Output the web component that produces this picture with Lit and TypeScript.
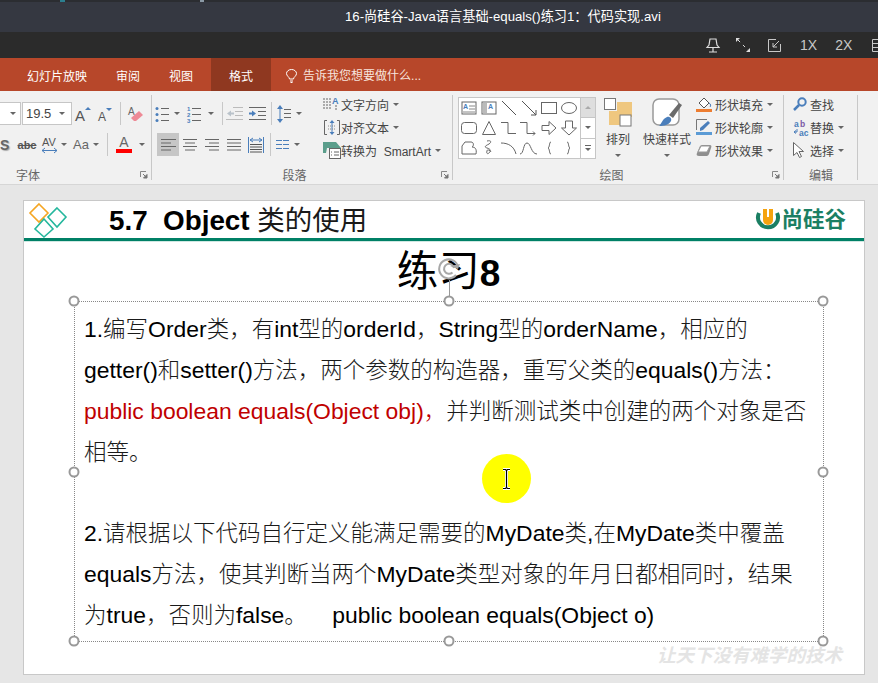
import { LitElement, html, css, svg } from 'lit';
import { customElement } from 'lit/decorators.js';

const BLUE = '#4a7ebb';
const GR = '#666';

// ribbon icons, all drawn on their own small grid
const icons: Record<string, [number, number, any]> = {
  fontUp: [16, 16, svg`<text x="0" y="15" font-family="Liberation Sans" font-size="15" fill="#555">A</text><path d="M10 4l3-3 3 3z" fill="${BLUE}"/>`],
  fontDown: [14, 16, svg`<text x="0" y="15" font-family="Liberation Sans" font-size="12" fill="#555">A</text><path d="M8 2h6l-3 3z" fill="${BLUE}"/>`],
  eraser: [16, 16, svg`<text x="0" y="9" font-family="Liberation Sans" font-size="10" fill="#666">A</text><path d="M3 12l8-7 4 4-7 6H6z" fill="#ee8a96"/>`],
  av: [17, 16, svg`<text x="1" y="9" font-family="Liberation Sans" font-size="11" fill="#555">AV</text><path d="M1 13.500h15M1 13.500l3-2.500M1 13.500l3 2.500M16 13.500l-3-2.500M16 13.500l-3 2.500" stroke="${BLUE}" fill="none"/>`],
  bullets: [15, 16, svg`<g fill="${BLUE}"><circle cx="2" cy="2.500" r="1.500"/><circle cx="2" cy="8.500" r="1.500"/><circle cx="2" cy="14.500" r="1.500"/></g><path d="M6 2.500h8M6 8.500h8M6 14.500h8" stroke="${GR}"/>`],
  numbers: [15, 16, svg`<g font-family="Liberation Sans" font-size="6" font-weight="700" fill="${BLUE}"><text x="0" y="5">1</text><text x="0" y="11">2</text><text x="0" y="17">3</text></g><path d="M5 2.500h9M5 8.500h9M5 14.500h9" stroke="${GR}"/>`],
  outdent: [17, 14, svg`<path d="M7 .5h10M9 4.500h8M9 8.500h8M0 12.500h17" stroke="#bbb"/><path d="M1 6.500l4-3v2h3v2H5v2z" fill="#b9c2ca"/>`],
  indent: [17, 14, svg`<path d="M0 .5h17M9 4.500h8M9 8.500h8M0 12.500h17" stroke="${GR}"/><path d="M7 6.500l-4-3v2H0v2h3v2z" fill="${BLUE}"/>`],
  spacing: [14, 18, svg`<path d="M3 2v14" stroke="${BLUE}"/><path d="M3 0l3 4H0zM3 18l3-4H0z" fill="${BLUE}"/><path d="M7 4.500h7M7 8.500h7M7 12.500h7" stroke="${GR}"/>`],
  alignL: [15, 12, svg`<path d="M0 .5h15M0 4h10M0 7.500h15M0 11h10" stroke="${GR}"/>`],
  alignC: [14, 12, svg`<path d="M0 .5h14M2 4h10M0 7.500h14M2 11h10" stroke="${GR}"/>`],
  alignR: [14, 12, svg`<path d="M0 .5h14M4 4h10M0 7.500h14M4 11h10" stroke="${GR}"/>`],
  justify: [14, 12, svg`<path d="M0 .5h14M0 4h14M0 7.500h14M0 11h14" stroke="${GR}"/>`],
  distribute: [16, 16, svg`<path d="M.5 0v16M15.500 0v16" stroke="${BLUE}"/><path d="M2 3h12M2 3l3-2M2 3l3 2M14 3l-3-2M14 3l-3 2" stroke="${BLUE}" fill="none"/><path d="M2 7.500h12M2 10h12M2 12.500h12M2 15h12" stroke="#555"/>`],
  columns: [13, 10, svg`<path d="M0 .5h6M7 .5h6M0 4.500h6M7 4.500h6M0 8.500h6M7 8.500h6" stroke="${BLUE}"/>`],
  textDir: [17, 16, svg`<path d="M1 2v12M4 2v12M7 2v12" stroke="${GR}" stroke-dasharray="2 1"/><text x="9" y="8" font-family="Liberation Sans" font-weight="700" font-size="9" fill="${BLUE}">A</text><path d="M13 9v6" stroke="#666" stroke-dasharray="2 1"/>`],
  textAlign: [16, 15, svg`<path d="M3 .5H.5v14H3M13 .5h2.500v14H13" stroke="${GR}" fill="none"/><path d="M8 0l2.500 3h-5zM8 15l2.500-3h-5z" fill="${BLUE}"/><path d="M8 3v9" stroke="${BLUE}"/><path d="M4 6h8M4 9h8" stroke="#888" stroke-dasharray="1 1"/>`],
  smartArt: [18, 17, svg`<path d="M0 0h13l5 6H4l-1 5H0z" fill="#5b9e8c"/><rect x="6.500" y="6.500" width="11" height="10" fill="#fff" stroke="#666"/><path d="M8 10h1M11 10h5M8 13h1M11 13h5" stroke="#666"/>`],
  arrange: [28, 30, svg`<rect x="13" y="4" width="15" height="15" fill="#efc77f"/><rect x="5" y="13" width="15" height="14" fill="#efc77f"/><rect x=".5" y=".5" width="11" height="11" fill="#fff" stroke="#777"/><rect x="16" y="17" width="11" height="11" fill="#fff" stroke="#777"/>`],
  quick: [30, 30, svg`<rect x="1" y="1" width="26" height="26" rx="6" fill="#fff" stroke="#999" stroke-width="1.500"/><path d="M17 17l10-12 3 2-9 13z" fill="#6b6b6b"/><path d="M7 28c2-1 3-7 8-9 3-1 5 2 4 4-2 4-7 5-12 5z" fill="${BLUE}"/>`],
  fill: [16, 15, svg`<path d="M3 6l5-5 5 5-5 5z" fill="#fff" stroke="#555"/><path d="M13 6c2 1 2 3 1 4" stroke="${BLUE}" fill="none"/><rect y="12" width="16" height="3" fill="#ed7d31"/>`],
  outline: [16, 16, svg`<path d="M.5 11V.5H11" stroke="#777" fill="none"/><path d="M4 9l8-7 2 2-7 7-3 1z" fill="${BLUE}"/><rect y="13" width="16" height="3" fill="#5b9bd5"/>`],
  effect: [16, 13, svg`<path d="M1 9l3-7c1-1 2-1 3-1h7c1 0 2 1 1 3l-2 6c-1 2-2 2-3 2H3C1 12 0 11 1 9z" fill="#8f8f8f"/><path d="M2 8l3-6h9l-3 6z" fill="#fff" stroke="#999"/>`],
  find: [14, 14, svg`<circle cx="9" cy="5" r="3.700" fill="none" stroke="${BLUE}" stroke-width="2"/><path d="M6 8l-5 5" stroke="${BLUE}" stroke-width="2.500"/>`],
  replace: [16, 15, svg`<g font-family="Liberation Sans" font-size="8.500" font-weight="700"><text x="1" y="6.500" fill="${BLUE}">a</text><text x="7" y="6.500" fill="#7b5aa6">b</text><text x="6" y="15.500" fill="${BLUE}">ac</text></g><path d="M4 9v3H1M1 12l2-1.500M1 12l2 1.500" stroke="${BLUE}" fill="none"/>`],
  select: [11, 16, svg`<path d="M.5.5v13l3.500-3 2.500 5 2-1-2.500-5h4.500z" fill="#fff" stroke="#666"/>`],
};

const shapes = [
  svg`<rect x="3" y="4" width="14" height="12" fill="#fff" stroke="#666"/><text x="4" y="11" font-size="7" font-family="Liberation Sans" font-weight="700" fill="${BLUE}">A</text><path d="M10 8h6M10 11h6M4 14h12" stroke="#888"/>`,
  svg`<rect x="3" y="4" width="14" height="12" fill="#fff" stroke="#666"/><path d="M5 5v10M7 5v10" stroke="#777"/><text x="9" y="11" font-size="7" font-family="Liberation Sans" font-weight="700" fill="${BLUE}">A</text>`,
  svg`<path d="M3 3l14 14" stroke="#555"/>`,
  svg`<path d="M3 3l14 14M17 17v-5M17 17h-5" stroke="#555" fill="none"/>`,
  svg`<rect x="2.500" y="4.500" width="15" height="11" fill="#fff" stroke="#666"/>`,
  svg`<ellipse cx="10" cy="10" rx="7.500" ry="5.500" fill="#fff" stroke="#666"/>`,
  svg`<rect x="2.500" y="4.500" width="15" height="11" rx="3" fill="#fff" stroke="#666"/>`,
  svg`<path d="M10 3.500l6.500 13h-13z" fill="#fff" stroke="#666"/>`,
  svg`<path d="M2 4.500h7v11h8" fill="none" stroke="#666"/>`,
  svg`<path d="M1 4.500h7v11h8M16 15.500l-2-2M16 15.500l-2 2" fill="none" stroke="#666"/>`,
  svg`<path d="M3 7.500h7v-4l7 6.500-7 6.500v-4H3z" fill="#fff" stroke="#666"/>`,
  svg`<path d="M6.500 3h7v7h4L10 17 2.500 10h4z" fill="#fff" stroke="#666"/>`,
  svg`<path d="M3 16V8l3-4h6c3 0 3 4 1 5 3 0 5 2 4 7z" fill="#fff" stroke="#666"/>`,
  svg`<path d="M8 3c4-1 5 1 2 3-4 2-5 3-2 4 4 1 4 3 2 5-1 1-3 1-2-2 0-2 3-1 4 1" fill="none" stroke="#666"/>`,
  svg`<path d="M2 5c7 0 13 3 15 11" fill="none" stroke="#666"/>`,
  svg`<path d="M1 16c4 0 3-11 7-11s4 11 10 11" fill="none" stroke="#666"/>`,
  svg`<path d="M12 4c-2 0-1 5-3 6 2 1 1 6 3 6" fill="none" stroke="#555"/>`,
  svg`<path d="M8 4c2 0 1 5 3 6-2 1-1 6-3 6" fill="none" stroke="#555"/>`,
];

const launcher = svg`<path d="M.5 6V.5H6" stroke="#888" fill="none"/><path d="M3 3l4 4M7 3.500V7H3.500z" stroke="#777" fill="#777"/>`;

// Latin and Chinese runs have different sizes on the slide
const runs = (text: string) =>
  text.split(/([\u3000-\u9fff\uff00-\uffef]+)/).map((part, i) =>
    i % 2 ? html`<span class="zh">${part}</span>` : part);

@customElement('app-root')
export class AppRoot extends LitElement {
  static styles = css`
    :host {
      display: block;
      position: relative;
      width: 878px;
      height: 683px;
      overflow: hidden;
      background: #e6e6e6;
      font-family: 'Liberation Sans', 'Noto Sans CJK SC', sans-serif;
    }
    svg { display: block; flex: none; overflow: visible; }

    .titlebar {
      height: 32px;
      box-sizing: border-box;
      padding-top: 2px;
      background:
        linear-gradient(90deg, transparent 60px, #2c7f8f 60px, #2c7f8f 65px, transparent 65px) 0 0 / 878px 2px no-repeat,
        linear-gradient(90deg, transparent 200px, #8a99a5 200px, #8a99a5 204px, transparent 204px) 0 0 / 878px 2px no-repeat,
        linear-gradient(#2b2d31, #2b2d31) 0 0 / 100% 2px no-repeat,
        #353841;
      color: #fff;
      font-size: 13.200px;
      line-height: 30px;
      display: flex;
    }
    .titlebar span { margin-left: 345px; white-space: nowrap; }

    .player {
      height: 26px;
      background: #2b2b2b;
      display: flex;
      align-items: center;
      padding-left: 706px;
      color: #c8c8c8;
      font-size: 14px;
    }
    .player .p1 { margin-left: 16px; }
    .player .p2 { margin-left: 18px; }
    .player .p3 { margin-left: 19px; }
    .player .p4 { margin-left: 18px; }
    .player .p5 { margin-left: 20px; }

    .tabs {
      height: 33px;
      background: #b7472a;
      display: flex;
      align-items: stretch;
      color: #fff;
      font-size: 12px;
      line-height: 34px;
      padding-left: 27px;
      box-sizing: border-box;
    }
    .tabs .t { margin-right: 29px; white-space: nowrap; padding-top: 2px; }
    .tabs .active {
      background: #8f3820;
      width: 60px;
      margin: 0 15px 0 -11px;
      text-align: center;
      padding-top: 2px;
    }
    .tabs .tell { display: flex; align-items: center; gap: 6px; padding-top: 3px; color: #f7e4de; font-size: 12px; }

    .ribbon {
      height: 94px;
      box-sizing: border-box;
      background: #f1f1f1;
      border-bottom: 1px solid #d6d6d6;
      display: flex;
      color: #444;
      font-size: 12px;
      overflow: hidden;
    }
    .group {
      position: relative;
      flex: none;
      box-sizing: border-box;
      height: 93px;
    }
    .group::after {
      content: '';
      position: absolute;
      right: 0;
      top: 4px;
      bottom: 4px;
      width: 1px;
      background: #c8c8c8;
    }
    .label {
      position: absolute;
      bottom: -1px;
      height: 18px;
      line-height: 18px;
      left: 0;
      right: 0;
      text-align: center;
      color: #666;
      font-size: 12px;
    }
    .label.lf { right: 96px; }
    .label.lp { right: 16px; }
    .label.ld { right: 14px; }
    .launch { position: absolute; right: 4px; bottom: 5px; }

    .g-font { width: 152px; }
    .g-para { width: 301px; display: flex; }
    .g-draw { width: 331px; display: flex; }
    .g-edit { width: 74px; padding: 3px 0 0 9px; }

    .rows { display: flex; flex-direction: column; gap: 8px; padding-top: 11px; }
    .row { display: flex; align-items: center; height: 23px; }
    .slot { display: flex; align-items: center; justify-content: center; height: 23px; flex: none; }
    .w8 { width: 8px; } .w10 { width: 10px; } .w11 { width: 11px; } .w12 { width: 12px; }
    .w16 { width: 16px; } .w18 { width: 18px; } .w22 { width: 22px; } .w23 { width: 23px; }
    .w24 { width: 24px; } .w30 { width: 30px; }
    .sep { width: 1px; height: 23px; background: #c8c8c8; flex: none; }
    .m4 { margin-left: 4px; } .m5 { margin-left: 5px; } .m7 { margin-left: 7px; } .m8 { margin-left: 8px; } .m2 { margin-left: 2px; }
    .m3 { margin-left: 3px; }
    .caret {
      display: block;
      width: 0;
      height: 0;
      border: 3px solid transparent;
      border-top: 3px solid #666;
      border-bottom: 0;
      flex: none;
    }
    .combo {
      height: 23px;
      box-sizing: border-box;
      background: #fff;
      border: 1px solid #c6c6c6;
      display: flex;
      align-items: center;
      justify-content: space-between;
      padding: 0 6px 0 3px;
      font-size: 13px;
      color: #444;
      flex: none;
    }
    .combo.c1 { width: 21px; border-left: 0; margin-right: 1px; justify-content: flex-end; padding-right: 4px; }
    .combo.c2 { width: 50px; }
    .s { font-weight: 700; font-size: 14px; color: #666; text-shadow: 1px 1px 1px #aaa; justify-content: flex-start; }
    .abc { font-size: 11px; color: #555; text-decoration: line-through; font-weight: 700; }
    .aa { font-size: 13px; color: #666; }
    .color { display: flex; flex-direction: column; align-items: center; font-size: 14px; line-height: 13px; color: #666; }
    .color i { display: block; width: 16px; height: 4px; background: #f00; margin-top: 0; }
    .selected { background: #c6c6c6; width: 22px; }

    .stack { display: flex; flex-direction: column; gap: 3px; }
    .stack .line { display: flex; align-items: center; height: 20px; white-space: nowrap; }
    .stack .caret { margin-left: 4px; }
    .ls { display: flex; justify-content: center; flex: none; }
    .para-right .ls { width: 19px; }
    .shape-col .ls { width: 19px; justify-content: flex-start; }
    .g-edit .ls { width: 17px; justify-content: flex-start; }
    .para-left { width: 170px; padding-left: 1px; box-sizing: border-box; }
    .para-right { padding-top: 3px; }

    .gallery {
      margin: 6px 0 0 5px;
      width: 138px;
      height: 62px;
      box-sizing: border-box;
      display: flex;
      border: 1px solid #c6c6c6;
      background: #fff;
      flex: none;
    }
    .cells { width: 122px; display: grid; grid-template-columns: repeat(6, 20px); grid-auto-rows: 20px; }
    .scroll { width: 14px; border-left: 1px solid #c6c6c6; display: flex; flex-direction: column; }
    .scroll div { flex: 1; display: flex; flex-direction: column; align-items: center; justify-content: center; border-bottom: 1px solid #c6c6c6; gap: 2px; }
    .scroll div:first-child { background: #dedede; }
    .scroll div:last-child { border-bottom: 0; }
    .up { border-top: 0; border-bottom: 3px solid #aaa; }
    .bar { display: block; width: 6px; height: 1px; background: #666; }

    .big { display: flex; flex-direction: column; align-items: center; padding-top: 7px; flex: none; }
    .big .ic { height: 30px; }
    .big .txt { margin-top: 3px; line-height: 18px; white-space: nowrap; }
    .big .caret { margin-top: 5px; }
    .b1 { width: 44px; }
    .b2 { width: 52px; margin-left: 1px; }
    .shape-col { margin-left: 3px; padding-top: 3px; }

    .slide {
      position: absolute;
      left: 23px;
      top: 200px;
      width: 842px;
      height: 475px;
      box-sizing: border-box;
      background: #fff;
      border: 1px solid #c8c8c8;
    }
    .head {
      height: 37px;
      display: flex;
      align-items: center;
      padding: 0 18px 0 4px;
      border-bottom: 3px solid #008066;
      box-shadow: 0 1px 0 #cfe8e2;
    }
    .head h1 {
      margin: 0 0 3px 41px;
      flex: 1;
      font-size: 27.800px;
      font-weight: 700;
      white-space: pre;
      color: #000;
    }
    .head h1 span { font-weight: 400; font-size: 27.500px; color: #1a1a1a; }
    .logo { display: flex; align-items: center; gap: 1px; color: #1b7f63; font-size: 21.500px; font-weight: 700; line-height: 24px; }
    .exercise {
      margin: 1px 0 0;
      height: 59px;
      line-height: 59px;
      padding-left: 9px;
      text-align: center;
      font-size: 41.500px;
      font-weight: 400;
      color: #000;
    }
    .exercise b { font-weight: 700; font-size: 37px; }
    .box {
      position: relative;
      margin-left: 50px;
      width: 750px;
      height: 341px;
      box-sizing: border-box;
      border: 1px dotted #888;
      padding: 7px 0 0 9px;
      font-size: 22.900px;
      line-height: 41px;
      color: #000;
      white-space: nowrap;
    }
    .box div { height: 41px; white-space: pre; }
    .box .gap-line { height: 40px; }
    .zh { font-size: 22.500px; font-weight: 300; color: #1a1a1a; }
    .red, .red .zh { color: #c00000; }
    .h {
      position: absolute;
      width: 11px;
      height: 11px;
      box-sizing: border-box;
      border: 2px solid #999;
      border-radius: 50%;
      background: #fff;
      transform: translate(-50%, -50%);
    }
    .hl { left: -1px; } .hc { left: 50%; } .hr { left: 100%; }
    .ht { top: -1px; } .hm { top: 50%; } .hb { top: 100%; }
    .stem { position: absolute; left: 50%; top: -22px; width: 1px; height: 22px; background: #999; }
    .rotate { position: absolute; left: calc(50% - 13px); top: -46px; }
    .watermark {
      position: absolute;
      left: 633px;
      top: 440px;
      font-size: 18.500px;
      font-weight: 700;
      font-style: italic;
      color: #e4e4e4;
      white-space: nowrap;
    }
    .pointer {
      position: absolute;
      left: 482px;
      top: 454px;
      width: 49px;
      height: 49px;
      border-radius: 50%;
      background: #ff0;
      display: flex;
      align-items: center;
      justify-content: center;
    }
  `;

  private icon(name: string) {
    const [w, h, body] = icons[name];
    return html`<svg width=${w} height=${h} viewBox="0 0 ${w} ${h}">${body}</svg>`;
  }

  private slot(name: string, cls = 'w22') {
    return html`<span class="slot ${cls}">${this.icon(name)}</span>`;
  }

  private caret(cls = 'w8') {
    return html`<span class="slot ${cls}"><i class="caret"></i></span>`;
  }

  private launchIcon() {
    return html`<svg class="launch" width="8" height="8" viewBox="0 0 8 8">${launcher}</svg>`;
  }

  private line(name: string, text: string, arrow = true) {
    return html`<div class="line"><span class="ls">${this.icon(name)}</span><span>${text}</span>${arrow ? html`<i class="caret"></i>` : ''}</div>`;
  }

  render() {
    return html`
      <div class="titlebar"><span>16-尚硅谷-Java语言基础-equals()练习1：代码实现.avi</span></div>

      <div class="player">
        <svg width="14" height="16" viewBox="0 0 14 16" fill="none" stroke="#ddd" stroke-width="1.200">
          <path d="M4 2h6l1 6 2 2.500H1L3 8zM7 10.500V15M3 15h8"/>
        </svg>
        <svg class="p1" width="14" height="14" viewBox="0 0 14 14" fill="#ddd" stroke="#ddd">
          <path d="M2 2l10 10" stroke-dasharray="3 4"/><path d="M0 0h4L0 4zM14 14h-4l4-4z" stroke="none"/>
        </svg>
        <svg class="p2" width="13" height="13" viewBox="0 0 13 13" fill="none" stroke="#c8c8c8">
          <path d="M12.500 5v7.500H.5V.5H8M11 2L5 8M5 4v4h4"/>
        </svg>
        <span class="p3">1X</span>
        <span class="p4">2X</span>
        <svg class="p5" width="10" height="13" viewBox="0 0 10 13" fill="none" stroke="#c8c8c8">
          <path d="M.5.5h12v12H.5zM.5 4.500h12M.5 8.500h12"/>
        </svg>
      </div>

      <div class="tabs">
        <span class="t">幻灯片放映</span>
        <span class="t">审阅</span>
        <span class="t">视图</span>
        <span class="active">格式</span>
        <span class="tell">
          <svg width="11" height="14" viewBox="0 0 11 14" fill="none" stroke="#fff">
            <path d="M3.500 10c0-2-3-3-3-5.500a5 4 0 0 1 10 0C10.500 7 7.500 8 7.500 10zM4 12h3M4.500 13.500h2"/>
          </svg>
          告诉我您想要做什么...
        </span>
      </div>

      <div class="ribbon">
        <div class="group g-font">
          <div class="rows">
            <div class="row">
              <span class="combo c1"><i class="caret"></i></span>
              <span class="combo c2">19.5<i class="caret"></i></span>
              ${this.slot('fontUp')}${this.slot('fontDown')}
              <span class="sep m4"></span>
              ${this.slot('eraser', 'w30')}
            </div>
            <div class="row">
              <span class="slot w12 s">S</span>
              <span class="slot w22 m4 abc">abc</span>
              ${this.slot('av', 'w22')}${this.caret()}
              <span class="slot w22 m2 aa">Aa</span>${this.caret()}
              <span class="sep m7"></span>
              <span class="slot w24 m4"><span class="color">A<i></i></span></span>
              ${this.caret('w12')}
            </div>
          </div>
          <div class="label lf">字体</div>
          ${this.launchIcon()}
        </div>

        <div class="group g-para">
          <div class="para-left">
            <div class="rows">
              <div class="row">
                ${this.slot('bullets', 'w18')}${this.caret('w12')}
                ${this.slot('numbers', 'w22')}${this.caret('w12')}
                <span class="sep m5"></span>
                ${this.slot('outdent', 'w23')}${this.slot('indent', 'w22')}
                <span class="sep m3"></span>
                ${this.slot('spacing', 'w23')}${this.caret('w8')}
              </div>
              <div class="row">
                <span class="slot m4 selected">${this.icon('alignL')}</span>
                ${this.slot('alignC')}${this.slot('alignR')}${this.slot('justify')}${this.slot('distribute')}
                <span class="sep m3"></span>
                ${this.slot('columns', 'w22')}${this.caret('w8')}
              </div>
            </div>
          </div>
          <div class="stack para-right">
            ${this.line('textDir', '文字方向')}
            ${this.line('textAlign', '对齐文本')}
            ${this.line('smartArt', '转换为\u00a0 SmartArt')}
          </div>
          <div class="label lp">段落</div>
          ${this.launchIcon()}
        </div>

        <div class="group g-draw">
          <div class="gallery">
            <div class="cells">
              ${shapes.map((s) => html`<svg width="20" height="20" viewBox="0 0 20 20">${s}</svg>`)}
            </div>
            <div class="scroll">
              <div><i class="caret up"></i></div>
              <div><i class="caret"></i></div>
              <div><i class="bar"></i><i class="caret"></i></div>
            </div>
          </div>
          <div class="big b1">
            <span class="ic">${this.icon('arrange')}</span>
            <span class="txt">排列</span>
            <i class="caret"></i>
          </div>
          <div class="big b2">
            <span class="ic">${this.icon('quick')}</span>
            <span class="txt">快速样式</span>
            <i class="caret"></i>
          </div>
          <div class="stack shape-col">
            ${this.line('fill', '形状填充')}
            ${this.line('outline', '形状轮廓')}
            ${this.line('effect', '形状效果')}
          </div>
          <div class="label ld">绘图</div>
          ${this.launchIcon()}
        </div>

        <div class="group g-edit">
          <div class="stack">
            ${this.line('find', '查找', false)}
            ${this.line('replace', '替换')}
            ${this.line('select', '选择')}
          </div>
          <div class="label">编辑</div>
        </div>
      </div>

      <div class="slide">
        <div class="head">
          <svg width="40" height="36" viewBox="0 0 40 36" fill="none" stroke-width="1.600">
            <path d="M11 2l9 9-9 9-9-9z" stroke="#f5a623"/>
            <path d="M29 6l9 9-9 10-9-10z" stroke="#25b79d"/>
            <path d="M16 17l9 10-9 8-9-8z" stroke="#25b79d"/>
          </svg>
          <h1>5.7  Object <span>类的使用</span></h1>
          <div class="logo">
            <svg width="24" height="24" viewBox="0 0 24 24">
              <path d="M3 5A10 10 0 1 0 21 5" fill="none" stroke="#1b7f63" stroke-width="4"/>
              <path d="M7 1h10v11a5 5 0 0 1-10 0z" fill="#f5a30f"/>
              <path d="M11 0h2v9h-2z" fill="#fff"/>
            </svg>
            尚硅谷
          </div>
        </div>
        <div class="exercise">练习<b>8</b></div>
        <div class="box">
          <div>${runs('1.编写Order类，有int型的orderId，String型的orderName，相应的')}</div>
          <div>${runs('getter()和setter()方法，两个参数的构造器，重写父类的equals()方法：')}</div>
          <div><span class="red">${runs('public boolean equals(Object obj)，')}</span>${runs('并判断测试类中创建的两个对象是否')}</div>
          <div>${runs('相等。')}</div>
          <div class="gap-line"></div>
          <div>${runs('2.请根据以下代码自行定义能满足需要的MyDate类,在MyDate类中覆盖')}</div>
          <div>${runs('equals方法，使其判断当两个MyDate类型对象的年月日都相同时，结果')}</div>
          <div>${runs('为true，否则为false。    public boolean equals(Object o)')}</div>

          <span class="stem"></span>
          <svg class="rotate" width="26" height="26" viewBox="0 0 26 26" fill="none" stroke="#a8a8a8" stroke-width="2">
            <path d="M20 19A9.500 9.500 0 1 1 22 11"/>
            <path d="M16.500 16.500A5 5 0 1 1 18 12"/>
            <path d="M14 10l8 3 2-5z" fill="#a8a8a8" stroke="none"/>
          </svg>
          <span class="h hl ht"></span><span class="h hc ht"></span><span class="h hr ht"></span>
          <span class="h hl hm"></span><span class="h hr hm"></span>
          <span class="h hl hb"></span><span class="h hc hb"></span><span class="h hr hb"></span>
        </div>
        <div class="watermark">让天下没有难学的技术</div>
      </div>

      <div class="pointer">
        <svg width="9" height="22" viewBox="0 0 9 22" fill="none">
          <path d="M1 1.500h7M1 20.500h7M4.500 2v18" stroke="#fff" stroke-width="3"/>
          <path d="M1 1.500h2.500l1 1 1-1H8M1 20.500h2.500l1-1 1 1H8M4.500 2v18" stroke="#000" stroke-width="1.200"/>
        </svg>
      </div>
    `;
  }
}

declare global {
  interface HTMLElementTagNameMap {
    'app-root': AppRoot;
  }
}
